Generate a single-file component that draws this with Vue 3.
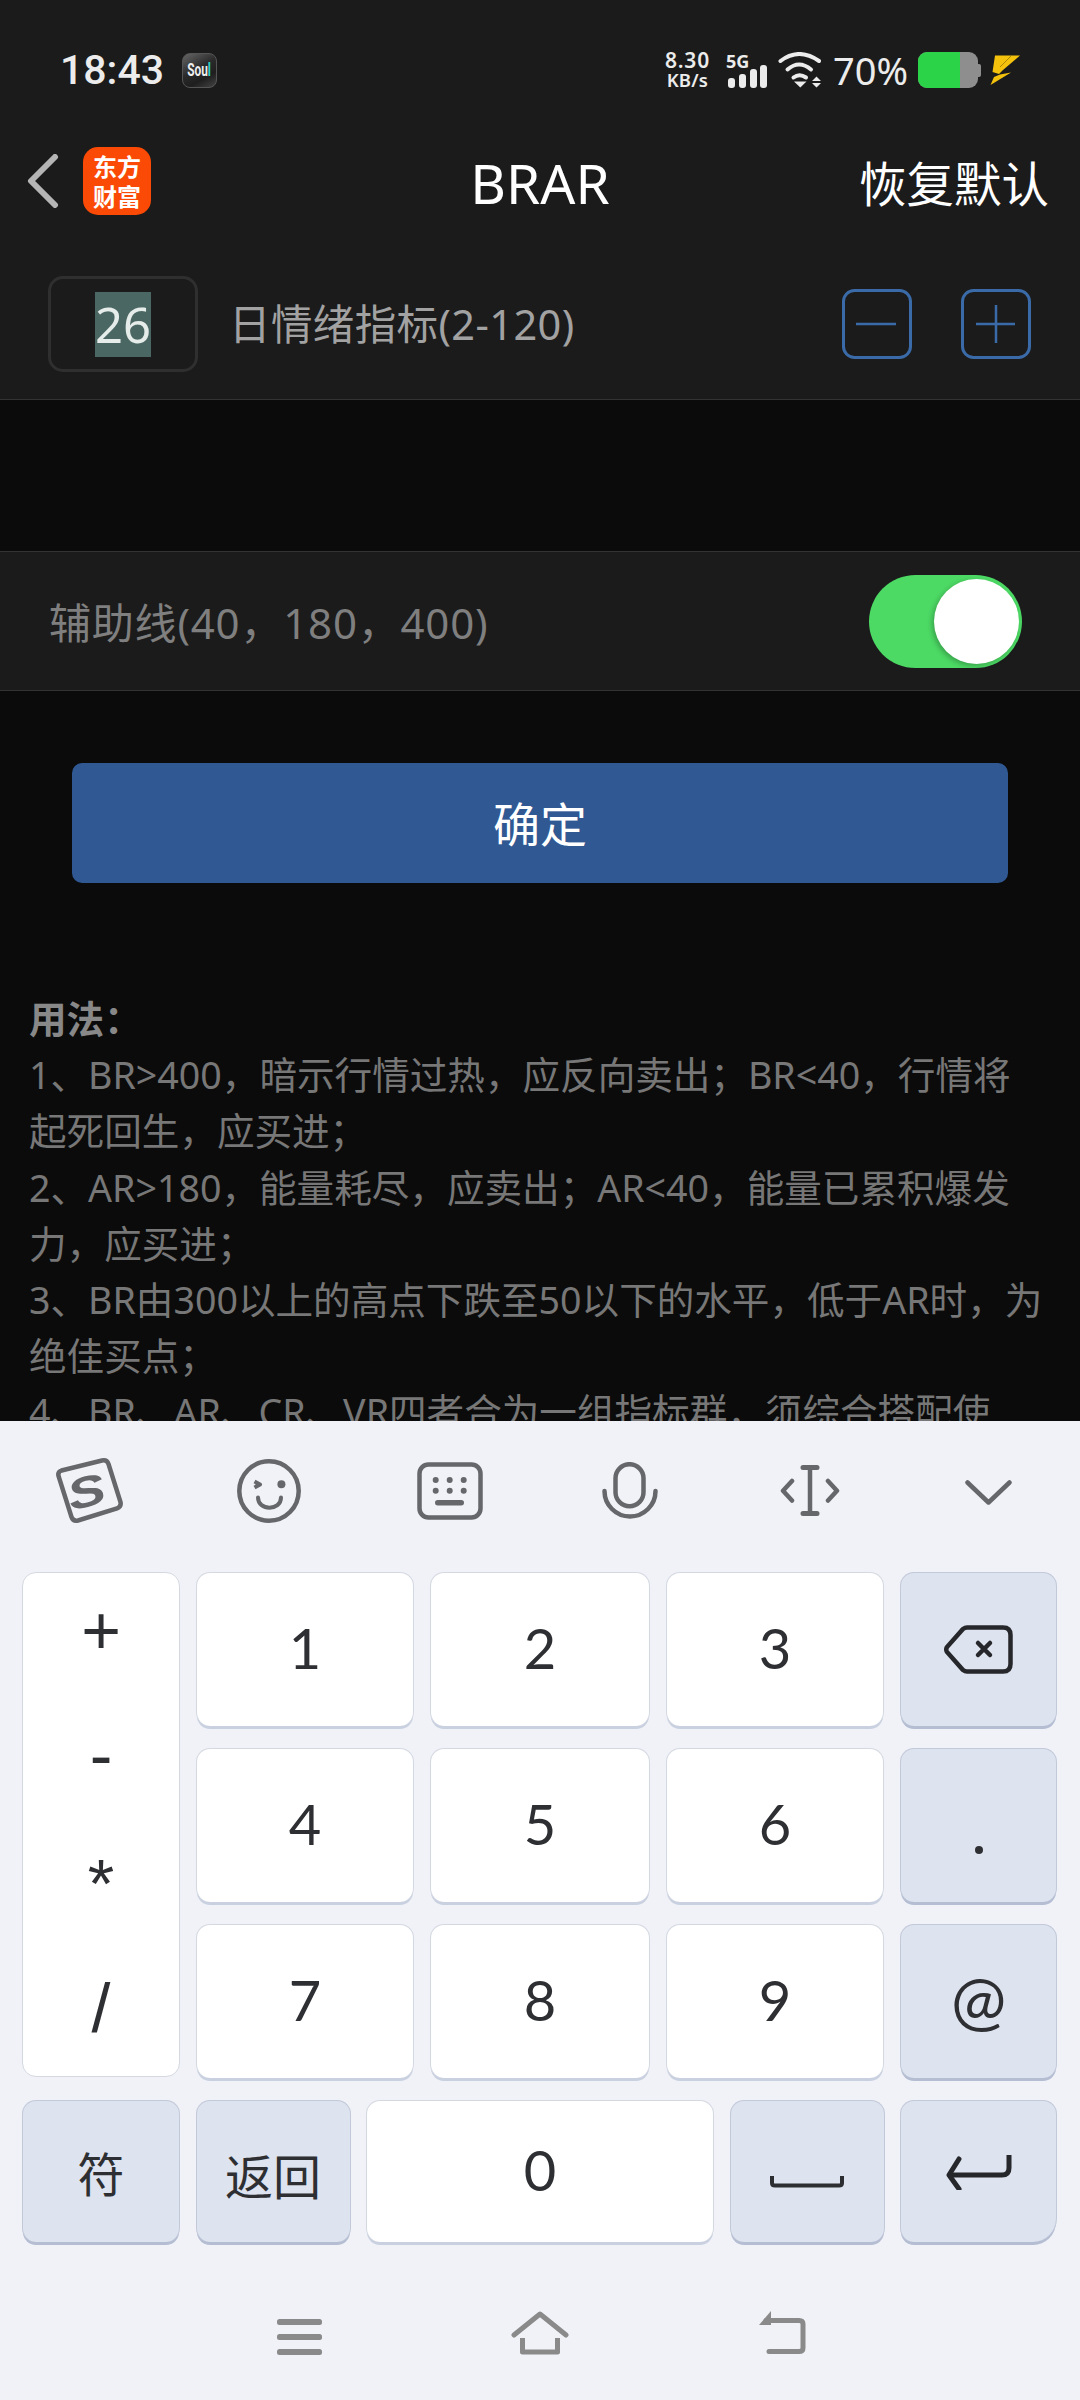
<template>
  <div class="phone">
    <div class="page">
      <div class="top">
        <div class="status">
          <span class="time">18:43</span>
          <div class="soul"><span class="soul-text">Sou<i>l</i></span></div>
          <div class="status-right">
            <div class="speed"><b>8.30</b><b class="unit">KB/s</b></div>
            <div class="signal">
              <span class="five-g">5G</span>
              <svg width="39" height="23" viewBox="0 0 39 23">
                <rect x="0" y="13" width="7" height="10" rx="3" fill="#ececec" />
                <rect x="11" y="9" width="7" height="14" rx="3" fill="#ececec" />
                <rect x="22" y="4" width="7" height="19" rx="3" fill="#ececec" />
                <rect x="32" y="0" width="7" height="23" rx="3" fill="#ececec" />
              </svg>
            </div>
            <svg class="wifi" width="44" height="36" viewBox="0 0 44 36">
              <path d="M2.5 9 Q21 -5 41 9" fill="none" stroke="#ececec" stroke-width="4" stroke-linecap="round" />
              <path d="M9.5 17.5 Q21 7.5 33 17.5" fill="none" stroke="#ececec" stroke-width="4" stroke-linecap="round" />
              <path d="M15.5 25.5 Q21.5 21 28 25.5" fill="none" stroke="#ececec" stroke-width="4" stroke-linecap="round" />
              <path d="M16 29.5 L28.5 29.5 L22.3 35.5 Z" fill="#ececec" />
              <path d="M34 29 L38.5 24.5 L43 29 Z M34 31 L43 31 L38.5 35.5 Z" fill="#ececec" />
            </svg>
            <span class="percent">70%</span>
            <div class="battery">
              <div class="battery-body"><span class="battery-fill" /></div>
              <span class="battery-nub" />
            </div>
            <svg class="bolt" width="30" height="30" viewBox="0 0 30 30">
              <path d="M5 0.5 H30 L13 15 L9 19 L2.5 17 Z" fill="#f4c20d" />
              <path d="M10 19.5 L21 17.5 L0.5 30 L4 22 Z" fill="#f4c20d" />
              <path d="M21 1 L10 12" stroke="#a98607" stroke-width="1" />
            </svg>
          </div>
        </div>
        <div class="header">
          <svg class="back" width="32" height="54" viewBox="0 0 32 54">
            <path d="M28 3 L4 27 L28 51" fill="none" stroke="#b5b5b5" stroke-width="6" stroke-linecap="round" stroke-linejoin="round" />
          </svg>
          <div class="logo"><span>东方</span><span>财富</span></div>
          <span class="title">BRAR</span>
          <span class="reset">恢复默认</span>
        </div>
        <div class="param">
          <div class="input"><span class="selected">26</span></div>
          <span class="param-label">日情绪指标(2-120)</span>
          <div class="stepper">
            <svg width="70" height="70" viewBox="0 0 70 70">
              <rect x="1.5" y="1.5" width="67" height="67" rx="11" fill="none" stroke="#3a6ba8" stroke-width="3" />
              <path d="M14 35 H54" stroke="#3a6ba8" stroke-width="2.5" />
            </svg>
            <svg width="70" height="70" viewBox="0 0 70 70">
              <rect x="1.5" y="1.5" width="67" height="67" rx="11" fill="none" stroke="#3a6ba8" stroke-width="3" />
              <path d="M15 35 H54 M35 16 V54" stroke="#3a6ba8" stroke-width="2.5" />
            </svg>
          </div>
        </div>
      </div>

      <div class="aux">
        <span class="aux-label">辅助线(40，180，400)</span>
        <div class="toggle"><span class="knob" /></div>
      </div>

      <div class="confirm">确定</div>

      <div class="usage">
        <p class="usage-head">用法：</p>
        <p v-for="line in usage" :key="line">{{ line }}</p>
      </div>
    </div>

    <div class="keyboard">
      <div class="toolbar">
        <svg class="tool t-s" width="68" height="66" viewBox="0 0 68 66">
          <path d="M5.5 12.5 L46 2.5 Q51 1.5 52.5 6 L64.5 44 Q65.5 48.5 61 50.5 L22 62.5 Q17 63.5 15.5 59 L2.5 18 Q1.5 14 5.5 12.5 Z" fill="none" stroke="#66676b" stroke-width="4.5" />
          <text class="s-text" text-anchor="middle" transform="translate(34 48) rotate(-15) scale(1.32 1)">S</text>
        </svg>
        <svg class="tool t-smile" width="64" height="64" viewBox="0 0 64 64">
          <circle cx="32" cy="32" r="29.7" fill="none" stroke="#66676b" stroke-width="4.5" />
          <path d="M17.5 22.5 L23 25.5 L17.5 28.5" fill="none" stroke="#66676b" stroke-width="4" stroke-linejoin="round" />
          <circle cx="44.4" cy="25.3" r="4" fill="#66676b" />
          <path d="M21 38.5 C21 52 44 52 44 38.5" fill="none" stroke="#66676b" stroke-width="4" stroke-linecap="round" />
        </svg>
        <svg class="tool t-board" width="66" height="58" viewBox="0 0 66 58">
          <rect x="2.5" y="2.5" width="61" height="53" rx="9" fill="none" stroke="#66676b" stroke-width="4.5" />
          <g fill="#66676b">
            <circle cx="18.7" cy="18" r="3" /><circle cx="32.7" cy="18" r="3" /><circle cx="46.7" cy="18" r="3" />
            <circle cx="18.7" cy="28.7" r="3" /><circle cx="32.7" cy="28.7" r="3" /><circle cx="46.7" cy="28.7" r="3" />
            <rect x="18" y="38" width="29" height="5.5" rx="2.75" />
          </g>
        </svg>
        <svg class="tool t-mic" width="58" height="58" viewBox="0 0 58 58">
          <rect x="14.5" y="2.2" width="28" height="42" rx="14" fill="none" stroke="#66676b" stroke-width="4.5" />
          <path d="M3.5 29 A25.5 25.5 0 0 0 54.5 29" fill="none" stroke="#66676b" stroke-width="4.5" stroke-linecap="round" />
        </svg>
        <svg class="tool t-cursor" width="60" height="51" viewBox="0 0 60 51">
          <path d="M30 2 V49" stroke="#66676b" stroke-width="4.5" />
          <path d="M23 2.5 H37 M23 48.5 H37" stroke="#66676b" stroke-width="5" stroke-linecap="round" />
          <path d="M12 16 L3 25.7 L12 35.5 M48 16 L57 25.7 L48 35.5" fill="none" stroke="#66676b" stroke-width="4.5" stroke-linecap="round" stroke-linejoin="round" />
        </svg>
        <svg class="tool t-down" width="47" height="25" viewBox="0 0 47 25">
          <path d="M2.5 2.5 L23.5 22.5 L44.5 2.5" fill="none" stroke="#66676b" stroke-width="4.5" stroke-linecap="round" stroke-linejoin="round" />
        </svg>
      </div>

      <div class="keys">
        <div class="key ops">
          <span v-for="op in ops" :key="op">{{ op }}</span>
        </div>
        <template v-for="(row, i) in digits" :key="i">
          <div v-for="d in row" :key="d" class="key num">{{ d }}</div>
          <div class="key side">
            <svg v-if="i === 0" width="69" height="49" viewBox="0 0 69 49">
              <path d="M23 2.5 H59 Q66.5 2.5 66.5 10 V39 Q66.5 46.5 59 46.5 H23 Q21 46.5 19 45 L3 27 Q1.5 24.5 3 22 L19 4 Q21 2.5 23 2.5 Z" fill="none" stroke="#26272a" stroke-width="4.5" />
              <path d="M34 18 L46 30 M46 18 L34 30" stroke="#26272a" stroke-width="4.5" stroke-linecap="round" />
            </svg>
            <span v-else-if="i === 1" class="dot" />
            <span v-else class="at">@</span>
          </div>
        </template>
      </div>

      <div class="bottom-row">
        <div class="key side fu"><span>符</span></div>
        <div class="key side ret"><span>返回</span></div>
        <div class="key zero num">0</div>
        <div class="key side space">
          <svg width="74" height="13" viewBox="0 0 74 13">
            <path d="M2 1 V8 Q2 10.5 5 10.5 H69 Q72 10.5 72 8 V1" fill="none" stroke="#2d2e31" stroke-width="4" />
          </svg>
        </div>
        <div class="key side enter">
          <svg width="66" height="36" viewBox="0 0 66 36">
            <path d="M63 1 V14 Q63 21 56 21 H5" fill="none" stroke="#26272a" stroke-width="5" />
            <path d="M13 5 L3 21 L13 35" fill="none" stroke="#26272a" stroke-width="5" stroke-linecap="round" stroke-linejoin="round" />
          </svg>
        </div>
      </div>

      <div class="nav">
        <svg width="45" height="36" viewBox="0 0 45 36">
          <rect x="0" y="0" width="45" height="6" rx="2.5" fill="#8a8a8a" />
          <rect x="0" y="15" width="45" height="6" rx="2.5" fill="#8a8a8a" />
          <rect x="0" y="30" width="45" height="6" rx="2.5" fill="#8a8a8a" />
        </svg>
        <svg width="58" height="44" viewBox="0 0 58 44">
          <path d="M3 24 L29 3 L55 24" fill="none" stroke="#8a8a8a" stroke-width="5" stroke-linecap="round" stroke-linejoin="round" />
          <path d="M11.5 27 V41 H46.5 V27" fill="none" stroke="#8a8a8a" stroke-width="5" stroke-linejoin="round" />
        </svg>
        <svg width="48" height="44" viewBox="0 0 48 44">
          <path d="M8 9.5 H41 Q45 9.5 45 13 V37 Q45 40.5 41 40.5 H11" fill="none" stroke="#8a8a8a" stroke-width="5" stroke-linecap="round" />
          <path d="M13 0 L1 14 L13 14 Z" fill="#8a8a8a" />
        </svg>
      </div>
    </div>
  </div>
</template>

<script setup>
const usage = [
  "1、BR>400，暗示行情过热，应反向卖出；BR<40，行情将",
  "起死回生，应买进；",
  "2、AR>180，能量耗尽，应卖出；AR<40，能量已累积爆发",
  "力，应买进；",
  "3、BR由300以上的高点下跌至50以下的水平，低于AR时，为",
  "绝佳买点；",
  "4、BR、AR、CR、VR四者合为一组指标群，须综合搭配使",
];

const ops = ["+", "-", "*", "/"];
const digits = [
  ["1", "2", "3"],
  ["4", "5", "6"],
  ["7", "8", "9"],
];
</script>

<style>
html,
body {
  margin: 0;
  background: #0b0b0b;
}
</style>

<style scoped>
.phone {
  display: flex;
  flex-direction: column;
  width: 1080px;
  height: 2400px;
  overflow: hidden;
  font-family: "Noto Sans", "Noto Sans CJK SC", sans-serif;
}

.page {
  height: 1421px;
  overflow: hidden;
  background: #0b0b0b;
}

.top {
  height: 551px;
  background: #0b0b0b;
}

.status,
.header,
.param {
  background: #1b1b1b;
}

.status {
  display: flex;
  align-items: center;
  height: 140px;
  padding-left: 60px;
  box-sizing: border-box;
  color: #ececec;
}

.time {
  font-family: Roboto, sans-serif;
  font-size: 41px;
  font-weight: 500;
  line-height: 1;
}

.soul {
  display: flex;
  align-items: center;
  justify-content: center;
  box-sizing: border-box;
  width: 35px;
  height: 35px;
  margin-left: 18px;
  overflow: hidden;
  background: linear-gradient(150deg, #666 0%, #2a2a2a 45%, #1e1e1e 70%, #444 100%);
  border: 1px solid #555;
  border-radius: 8px;
}

.soul-text {
  font-family: Roboto, sans-serif;
  font-size: 18px;
  font-weight: 700;
  line-height: 1;
  color: #eee;
  transform: scaleX(0.66);
}

.soul-text i {
  font-style: normal;
  color: #2ad4c5;
}

.status-right {
  display: flex;
  align-items: center;
  margin-left: auto;
  padding-right: 60px;
}

.speed {
  display: flex;
  flex-direction: column;
  align-items: center;
  width: 47px;
  font-size: 21px;
  line-height: 20px;
}

.speed b {
  font-weight: 600;
  letter-spacing: 0.8px;
}

.speed .unit {
  font-size: 18.5px;
  letter-spacing: 0.2px;
}

.signal {
  position: relative;
  display: flex;
  align-items: flex-end;
  justify-content: flex-end;
  width: 41px;
  height: 36px;
  margin-left: 15px;
}

.five-g {
  position: absolute;
  top: 0;
  left: 0;
  font-size: 18px;
  font-weight: 700;
  line-height: 18px;
}

.wifi {
  margin-left: 11px;
}

.percent {
  margin-left: 11px;
  font-size: 38px;
  line-height: 1;
}

.battery {
  display: flex;
  align-items: center;
  margin-left: 10px;
}

.battery-body {
  width: 60px;
  height: 36px;
  overflow: hidden;
  background: #8e8e8e;
  border-radius: 9px;
}

.battery-fill {
  display: block;
  width: 42px;
  height: 36px;
  background: #2bd348;
}

.battery-nub {
  width: 3px;
  height: 13px;
  background: #8e8e8e;
  border-radius: 0 2px 2px 0;
}

.bolt {
  margin-left: 9px;
}

.header {
  position: relative;
  display: flex;
  align-items: center;
  height: 82px;
  padding-left: 27px;
}

.logo {
  display: flex;
  flex-direction: column;
  align-items: center;
  justify-content: center;
  width: 68px;
  height: 68px;
  margin-left: 24px;
  font-family: "Noto Sans CJK SC", sans-serif;
  font-size: 24px;
  font-weight: 700;
  line-height: 30px;
  color: #fff;
  background: #fb4a05;
  border-radius: 15px;
}

.title {
  position: absolute;
  left: 0;
  width: 100%;
  padding-top: 2px;
  font-size: 55px;
  text-align: center;
  color: #fff;
}

.reset {
  position: relative;
  margin-left: auto;
  padding-right: 31px;
  font-size: 47.5px;
  color: #fff;
}

.param {
  display: flex;
  align-items: flex-start;
  height: 178px;
  padding: 54px 49px 0 48px;
  box-sizing: border-box;
  border-bottom: 1px solid #333;
}

.input {
  display: flex;
  align-items: center;
  justify-content: center;
  box-sizing: border-box;
  width: 150px;
  height: 96px;
  border: 3px solid #2f2f2f;
  border-radius: 15px;
}

.selected {
  width: 56px;
  font-size: 49px;
  line-height: 65px;
  color: #e6ece9;
  text-align: center;
  background: #4a6763;
}

.param-label {
  margin-left: 31px;
  font-size: 41.5px;
  line-height: 96px;
  letter-spacing: 0.4px;
  color: #a2a2a2;
}

.stepper {
  display: flex;
  gap: 49px;
  margin-top: 13px;
  margin-left: auto;
}

.aux {
  display: flex;
  align-items: center;
  justify-content: space-between;
  box-sizing: border-box;
  height: 140px;
  padding: 0 58px 0 49px;
  background: #1b1b1b;
  border-top: 1px solid #333;
  border-bottom: 1px solid #333;
}

.aux-label {
  margin-top: -2px;
  font-size: 42px;
  letter-spacing: 0.8px;
  color: #7f7f7f;
}

.toggle {
  display: flex;
  align-items: center;
  justify-content: flex-end;
  box-sizing: border-box;
  width: 153px;
  height: 93px;
  padding-right: 3px;
  background: #4cd964;
  border-radius: 47px;
}

.knob {
  width: 85px;
  height: 85px;
  background: #fff;
  border-radius: 50%;
  box-shadow: -2px 2px 5px rgba(0, 0, 0, 0.25);
}

.confirm {
  display: flex;
  align-items: center;
  justify-content: center;
  box-sizing: border-box;
  height: 120px;
  margin: 72px 72px 0;
  padding-bottom: 4px;
  font-size: 47px;
  color: #fff;
  background: #305893;
  border-radius: 10px;
}

.usage {
  margin-top: 108px;
  padding-left: 29px;
  font-size: 37.6px;
  line-height: 56.2px;
  color: #777;
  white-space: nowrap;
}

.usage p {
  margin: 0;
}

.usage .usage-head {
  font-weight: 700;
  color: #888;
}

.keyboard {
  flex: 1;
  background: #f0f2f7;
}

.toolbar {
  position: relative;
  height: 151px;
}

.tool {
  position: absolute;
}

.t-s {
  top: 37px;
  left: 56px;
}

.t-smile {
  top: 38px;
  left: 237px;
}

.t-board {
  top: 41px;
  left: 417px;
}

.t-mic {
  top: 41px;
  left: 601px;
}

.t-cursor {
  top: 44px;
  left: 780px;
}

.t-down {
  top: 59px;
  left: 965px;
}

.s-text {
  font-family: "Liberation Sans", sans-serif;
  font-size: 43px;
  font-style: italic;
  font-weight: 700;
  fill: #66676b;
}

.keys {
  display: grid;
  grid-template-columns: 158px 218px 220px 218px 157px;
  grid-auto-rows: 154px;
  column-gap: 16px;
  row-gap: 22px;
  padding-left: 22px;
}

.key {
  display: flex;
  align-items: center;
  justify-content: center;
  box-sizing: border-box;
  font-family: Lato, sans-serif;
  font-size: 56px;
  color: #2e2f32;
  background: #fff;
  border: 1px solid #d4d8e1;
  border-bottom: 0;
  border-radius: 14px;
  box-shadow: 0 4px 0 -1px #c9d1e0;
}

.num {
  padding-bottom: 5px;
}

.ops {
  position: relative;
  z-index: 1;
  flex-direction: column;
  grid-row: span 3;
  justify-content: flex-start;
  height: 505px;
  box-shadow: none;
  border-bottom: 1px solid #d4d8e1;
}

.ops span {
  height: 125px;
  font-family: "Liberation Sans", sans-serif;
  font-size: 68px;
  line-height: 125px;
}

.ops span:nth-child(1) {
  margin-top: -5px;
}

.ops span:nth-child(3) {
  margin-top: 3px;
}

.side {
  background: #dde3ef;
  border-color: #c2c9d9;
  box-shadow: 0 4px 0 -1px #b4bdd2;
}

.dot {
  width: 8px;
  height: 8px;
  margin-top: 48px;
  background: #2e2f32;
  border-radius: 50%;
}

.at {
  margin-bottom: 6px;
  font-size: 66px;
}

.bottom-row {
  display: flex;
  gap: 15.5px;
  height: 142px;
  margin-top: 22px;
  padding-left: 22px;
}

.fu {
  width: 158px;
}

.ret {
  width: 155px;
}

.zero {
  width: 348px;
}

.space {
  width: 155px;
  padding-top: 20px;
}

.enter {
  width: 157px;
  border-bottom-right-radius: 24px;
}

.fu span,
.ret span {
  font-family: "Noto Sans CJK SC", sans-serif;
  font-size: 47px;
  line-height: 1;
}

.ret span {
  margin-top: 5px;
  font-size: 48px;
}

.fu span {
  margin-top: -1px;
}

.nav {
  display: flex;
  align-items: flex-end;
  height: 113px;
  padding-left: 277px;
  gap: 189px;
}
</style>
